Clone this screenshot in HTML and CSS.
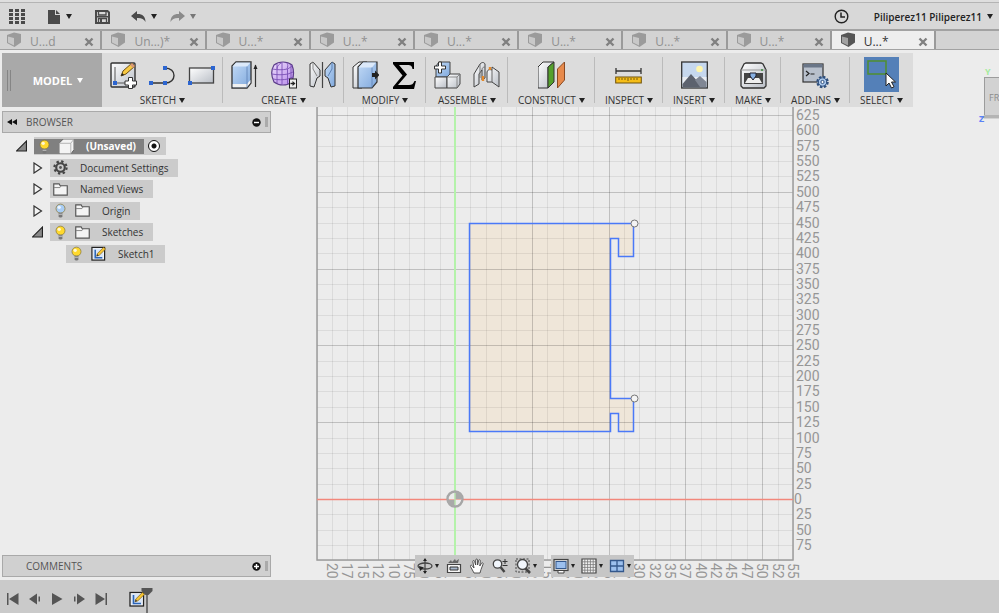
FILE: index.html
```html
<!DOCTYPE html>
<html lang="en">
<head>
    <meta charset="UTF-8">
    <title>Sketch workspace</title>
    <link rel="stylesheet" href="styles.css">
</head>
<body>
    <!-- shared icons -->
    <svg class="defs" width="0" height="0">
        <linearGradient id="blue" x1="0" y1="0" x2="1" y2="1"><stop offset="0" stop-color="#c3dbf7"/><stop offset="1" stop-color="#7fa8dc"/></linearGradient>
        <linearGradient id="silver" x1="0" y1="0" x2="1" y2="1"><stop offset="0" stop-color="#ffffff"/><stop offset="1" stop-color="#b9bec6"/></linearGradient>
        <linearGradient id="purple" x1="0" y1="0" x2="1" y2="1"><stop offset="0" stop-color="#ecdcfd"/><stop offset="1" stop-color="#b78ae8"/></linearGradient>
        <symbol id="tab-cube" viewBox="0 0 16 16">
            <path d="M1 3l7-2.500 7 1.500v8.500L8.500 15 1 11z" fill="currentColor"/>
            <path d="M2 4.500l6 1.500v7.500l-6-3z" fill="#fff" fill-opacity=".45"/>
        </symbol>
        <symbol id="close" viewBox="0 0 10 10">
            <path d="M1.500 1.500l7 7M8.500 1.500l-7 7" stroke="currentColor" stroke-width="2.400"/>
        </symbol>
        <symbol id="bulb" viewBox="0 0 14 16">
            <circle cx="7" cy="6" r="4.800" fill="currentColor" stroke="#8a7a3a" stroke-width=".8"/>
            <circle cx="5.600" cy="4.600" r="1.800" fill="#fff" fill-opacity=".8"/>
            <path d="M5 10.500h4v3.500l-1 1.500H6L5 14z" fill="#777"/>
            <path d="M5 12h4" stroke="#ddd" stroke-width=".8"/>
        </symbol>
        <symbol id="folder" viewBox="0 0 14 14">
            <path d="M.7 3.500V1.700h5l1 1.800h6.600v8.800H.7z" fill="#f4f4f4" stroke="#555" stroke-width="1.100"/>
            <path d="M1 5.200h5.500l1-1.500" fill="none" stroke="#777" stroke-width=".8"/>
        </symbol>
        <symbol id="sketch" viewBox="0 0 16 16">
            <rect x="1" y="1.500" width="13.500" height="13.500" fill="#fff" stroke="#222" stroke-width="1.300"/>
            <rect x="2.200" y="2.700" width="11" height="11" fill="#d9e6f7"/>
            <path d="M4.500 4v8.500H12" fill="none" stroke="#2c65b8" stroke-width="1.600"/>
            <path d="M6 10.800l.9-2.900L13.500 1.300l2 2-6.600 6.500z" fill="#f7c632" stroke="#7a5a14" stroke-width=".7"/>
            <path d="M6 10.800l.7-2.200 1.500 1.500z" fill="#333"/>
        </symbol>
    </svg>

    <header class="topbar">
        <button class="icon-btn" aria-label="Data panel">
            <svg width="16" height="15" viewBox="0 0 16 15" fill="#4a4a4a"><path d="M0 0h4v3H0zM6 0h4v3H6zM12 0h4v3h-4zM0 4h4v3H0zM6 4h4v3H6zM12 4h4v3h-4zM0 8h4v3H0zM6 8h4v3H6zM12 8h4v3h-4zM0 12h4v3H0zM6 12h4v3H6zM12 12h4v3h-4z"/></svg>
        </button>
        <button class="icon-btn" aria-label="File">
            <svg width="13" height="14" viewBox="0 0 13 14" fill="#4a4a4a"><path d="M0 0h7v5h5v9H0z"/><path d="M8 0l4 4H8z"/></svg>
            <span class="caret"></span>
        </button>
        <button class="icon-btn" aria-label="Save">
            <svg width="15" height="14" viewBox="0 0 15 14"><path d="M1 1h11.500L14 2.500V13H1z" fill="none" stroke="#4a4a4a" stroke-width="2"/><path d="M3.500 1h7.500v4H3.500zM3.500 8.500h8V13h-8z" fill="none" stroke="#4a4a4a" stroke-width="1.300"/><path d="M2 6h11v1.500H2zM5 9h2v4H5z" fill="#4a4a4a"/></svg>
        </button>
        <div class="history">
            <button class="icon-btn" aria-label="Undo">
                <svg width="15" height="12" viewBox="0 0 15 12"><path d="M6 0v3c5-.3 8.500 2 8.500 8-1.500-3-4-4.200-8.500-4v3L0 5z" fill="#4a4a4a"/></svg>
                <span class="caret"></span>
            </button>
            <button class="icon-btn faded" aria-label="Redo">
                <svg width="15" height="12" viewBox="0 0 15 12"><path d="M9 0v3C4 2.700.5 5 .5 11 2 8 4.500 6.800 9 7v3l6-5z" fill="#8a8a8a"/></svg>
                <span class="caret"></span>
            </button>
        </div>
        <div class="account">
            <button class="icon-btn" aria-label="Job status">
                <svg width="15" height="15" viewBox="0 0 15 15"><circle cx="7.500" cy="7.500" r="6.300" fill="none" stroke="#222" stroke-width="1.400"/><path d="M7 3.500V8h4" fill="none" stroke="#222" stroke-width="1.500"/></svg>
            </button>
            <button class="user">Piliperez11 Piliperez11 <span class="caret"></span></button>
        </div>
    </header>

    <nav class="tabs">
        <div class="tab"><svg class="tab-icon"><use href="#tab-cube"/></svg><span>U...d</span><button aria-label="Close"><svg><use href="#close"/></svg></button></div>
        <div class="tab"><svg class="tab-icon"><use href="#tab-cube"/></svg><span>Un...)*</span><button aria-label="Close"><svg><use href="#close"/></svg></button></div>
        <div class="tab"><svg class="tab-icon"><use href="#tab-cube"/></svg><span>U...*</span><button aria-label="Close"><svg><use href="#close"/></svg></button></div>
        <div class="tab"><svg class="tab-icon"><use href="#tab-cube"/></svg><span>U...*</span><button aria-label="Close"><svg><use href="#close"/></svg></button></div>
        <div class="tab"><svg class="tab-icon"><use href="#tab-cube"/></svg><span>U...*</span><button aria-label="Close"><svg><use href="#close"/></svg></button></div>
        <div class="tab"><svg class="tab-icon"><use href="#tab-cube"/></svg><span>U...*</span><button aria-label="Close"><svg><use href="#close"/></svg></button></div>
        <div class="tab"><svg class="tab-icon"><use href="#tab-cube"/></svg><span>U...*</span><button aria-label="Close"><svg><use href="#close"/></svg></button></div>
        <div class="tab"><svg class="tab-icon"><use href="#tab-cube"/></svg><span>U...*</span><button aria-label="Close"><svg><use href="#close"/></svg></button></div>
        <div class="tab active"><svg class="tab-icon"><use href="#tab-cube"/></svg><span>U...*</span><button aria-label="Close"><svg><use href="#close"/></svg></button></div>
    </nav>

    <main class="viewport">
        <svg class="canvas">
            <g transform="translate(455 449)">
                <path class="profile" d="M14.500-275.500h164v33h-15v-18h-8v160h23v33h-15v-18h-8v18h-141z"/>
                <g id="grid"></g>
                <line class="axis-y" x1="0" y1="-396" x2="0" y2="61"/>
                <line class="axis-x" x1="-138" y1="0.500" x2="338" y2="0.500"/>
                <path class="outline" d="M14.500-275.500h164v33h-15v-18h-8v160h23v33h-15v-18h-8v18h-141z"/>
                <circle class="point" cx="179.500" cy="-275.500" r="3.500"/>
                <circle class="point" cx="179.500" cy="-100.500" r="3.500"/>
                <circle cx="0" cy="0" r="7.500" fill="#ececec" stroke="#a6a6a6" stroke-width="2.400"/>
                <path d="M0 0V-8A8 8 0 0 1 8 0zM0 0V8A8 8 0 0 1-8 0z" fill="#a9a9a9"/>
                <path d="M-6 .5H6" stroke="#e8b0a8"/>
                <path d="M0-6V6" stroke="#b4e0aa" stroke-width="1.500"/>
            </g>
        </svg>

        <div class="toolbar">
            <button class="workspace"><span class="grip"></span>MODEL <span class="caret"></span></button>

            <div class="group">
                <div class="icons">
                    <button aria-label="Create sketch"><svg viewBox="0 0 27 28"><rect x="1" y="2" width="24" height="24" rx="1" fill="url(#silver)" stroke="#333" stroke-width="1.400"/><path d="M5 6v16h12" fill="none" stroke="#555"/><path d="M3 20h4v4H3z" fill="#2c65d0"/><path d="M11 15l2-5 9-8 3 3-9 8z" fill="#f7c943" stroke="#6b4d12"/><path d="M22 2l3 3-2 2-3-3z" fill="#d79a7a"/><path d="M11 15l1.200-3 2 2z" fill="#222"/><path d="M18.500 16.500h4v3.500h4v4h-4v3.500h-4V24h-3.500v-4h3.500z" fill="#fff" stroke="#333"/></svg></button>
                    <button aria-label="Line"><svg viewBox="0 0 27 28"><path d="M2 22h14c12 0 12-15 0-15" fill="none" stroke="#333" stroke-width="1.400"/><path d="M0 20h4v4H0zM14 20h4v4h-4zM14 5h4v4h-4z" fill="#2c65d0"/></svg></button>
                    <button aria-label="Rectangle"><svg viewBox="0 0 27 28"><rect x="1.500" y="7" width="24" height="15" fill="url(#silver)" stroke="#444" stroke-width="1.300"/><path d="M0 20h4v4H0zM23 5h4v4h-4z" fill="#2c65d0"/></svg></button>
                </div>
                <button class="label">SKETCH <span class="caret"></span></button>
            </div>

            <div class="group">
                <div class="icons">
                    <button aria-label="Extrude"><svg viewBox="0 0 27 28"><path d="M1 5l4-4h15v21l-4 5H1z" fill="url(#blue)" stroke="#333" stroke-width="1.300"/><path d="M1.700 23H16l3.400-4v3l-3.600 4.300H1.700z" fill="#f1f1f1"/><path d="M1.500 5.500H16L19.500 1.500H5z" fill="#dce9f9"/><path d="M16 5.500v21" fill="none" stroke="#5d82b5" stroke-width=".8"/><path d="M24.500 26V4" stroke="#333" stroke-width="1.200"/><path d="M22.500 8l2-4.500 2 4.500z" fill="#222"/></svg></button>
                    <button aria-label="Create form"><svg viewBox="0 0 27 28"><path d="M4 4c5-4 13-4 18 0 2 5 2 11 0 17-5 4-13 4-18 0C1 15 1 9 4 4z" fill="url(#purple)" stroke="#5c3d8a" stroke-width="1.200"/><path d="M2.500 8c5 1 10 1 15 0l5-3M2 13c5 1 11 1 16 0l5-2M3 18c5 1 10 1 15 0l5-2M7 3v19M12 1.500v22M17.500 8v15M7 8c0-3 2-5 5-6.500M17 8c1-3 1-4 0-6M21 4v17" fill="none" stroke="#7a50b5" stroke-width=".9"/><rect x="19.500" y="18" width="7" height="9" fill="#eee" stroke="#222"/><path d="M20.500 22.500h3" stroke="#222" stroke-width="1.400"/><path d="M22.500 20l3 2.500-3 2.500z" fill="#222"/></svg></button>
                    <button aria-label="Mirror"><svg viewBox="0 0 27 28"><path d="M1 3l3-2 7 8v6l-3 2-3 9-4-1z" fill="url(#silver)" stroke="#333"/><path d="M4 1v7l4 7" stroke="#888" fill="none"/><path d="M26 3l-3-2-7 8v6l3 2 3 9 4-1z" fill="url(#blue)" stroke="#333"/><path d="M23 1v7l-4 7" stroke="#5d82b5" fill="none"/><path d="M13.500 1v26" stroke="#444" stroke-width="1.200"/></svg></button>
                </div>
                <button class="label">CREATE <span class="caret"></span></button>
            </div>

            <div class="group">
                <div class="icons">
                    <button aria-label="Press pull"><svg viewBox="0 0 27 28"><path d="M1 6l6-5h8l-5 5v21H1z" fill="url(#silver)" stroke="#333"/><path d="M6 6l5-5h14v20l-5 6H6z" fill="url(#blue)" stroke="#333" stroke-width="1.200"/><path d="M6.500 6.500H20l4-5H11z" fill="#dce9f9"/><path d="M20 6.500v20" fill="none" stroke="#5d82b5" stroke-width=".8"/><path d="M20 12h3V9.500l4.500 4.500-4.500 4.500V16h-3z" fill="#222"/></svg></button>
                    <button aria-label="Parameters"><svg viewBox="0 0 27 28"><path d="M2 1h21v7h-1.500c-.5-3-1.500-4-5-4H8l8 9.500L7 24h11c3 0 4-1 5.500-4H25l-2 8H2v-2l9.500-11.500L2 3z" fill="#000"/></svg></button>
                </div>
                <button class="label">MODIFY <span class="caret"></span></button>
            </div>

            <div class="group">
                <div class="icons">
                    <button aria-label="New component"><svg viewBox="0 0 27 28"><path d="M2 5l3-4h11v12l-3 3H2z" fill="url(#blue)" stroke="#444"/><path d="M1 16h12v11H1z" fill="url(#silver)" stroke="#444"/><path d="M13 16l3-3h10v10l-3 4H13z" fill="url(#silver)" stroke="#444"/><path d="M13 16h10l3-3M23 16v11" fill="none" stroke="#777" stroke-width=".8"/><path d="M4.500 1h3v4h4v3h-4v4h-3V8h-4V5h4z" fill="#fff" stroke="#333"/></svg></button>
                    <button aria-label="Joint"><svg viewBox="0 0 27 28"><path d="M1 26V13l6-10c2-2 4-2 5 0v14l-3 2V9L6 13v10z" fill="url(#silver)" stroke="#444"/><path d="M7 3v14M9 9c0-2 1-3 3-3" fill="none" stroke="#777"/><path d="M14 21V12c0-3 2-4 5-3V6l7 5v15l-7-5z" fill="url(#silver)" stroke="#444"/><path d="M19 9v12" fill="none" stroke="#666"/><path d="M10 20v-5M17 9V6" stroke="#e58a2c" stroke-width="2.400"/></svg></button>
                </div>
                <button class="label">ASSEMBLE <span class="caret"></span></button>
            </div>

            <div class="group wide">
                <div class="icons">
                    <button aria-label="Offset plane"><svg viewBox="0 0 27 28"><path d="M0 6l5-5h11l-6 5v21H0z" fill="url(#silver)" stroke="#333"/><path d="M10 6l6-5v20l-6 6z" fill="#54a02c" stroke="#333"/><path d="M19.500 8l7-7v18l-7 8z" fill="#e78a4c" stroke="#8a4a22"/></svg></button>
                </div>
                <button class="label">CONSTRUCT <span class="caret"></span></button>
            </div>

            <div class="group wide">
                <div class="icons">
                    <button aria-label="Measure"><svg viewBox="0 0 27 28"><path d="M1 10h25M1 7v6M26 7v6" stroke="#333" stroke-width="1.300"/><rect x=".7" y="16" width="25.600" height="6" fill="#f5bd18" stroke="#6e520a"/><path d="M4 17v2M7 17v2M10 17v2M13 17v3M16 17v2M19 17v2M22 17v2" stroke="#6e520a" stroke-width=".9"/></svg></button>
                </div>
                <button class="label">INSPECT <span class="caret"></span></button>
            </div>

            <div class="group wide">
                <div class="icons">
                    <button aria-label="Insert image"><svg viewBox="0 0 27 28"><rect x=".7" y="1" width="25.600" height="26" fill="#c6d8ee" stroke="#333" stroke-width="1.300"/><path d="M1.500 16h24v10h-24z" fill="#e9edf2"/><circle cx="18.500" cy="8" r="3.300" fill="#fff6ae"/><path d="M1.500 23L10 13l8 9 3 4H1.500z" fill="#5c626e"/><path d="M14 19l5-4 6.500 6v5H19z" fill="#808794"/></svg></button>
                </div>
                <button class="label">INSERT <span class="caret"></span></button>
            </div>

            <div class="group wide">
                <div class="icons">
                    <button aria-label="3D print"><svg viewBox="0 0 27 28"><path d="M1 9l3-6 2-1h15l2 1 3 6v16l-2 2H3l-2-2z" fill="url(#silver)" stroke="#333" stroke-width="1.300"/><path d="M1 9h25" stroke="#999"/><rect x="4" y="12" width="19" height="11" fill="#444"/><path d="M5 22l3-5h11l3 5z" fill="#eee"/><path d="M10 12h6v3l-3 4-3-4z" fill="#86afe2" stroke="#223"/><circle cx="22" cy="9" r="1" fill="#3a8c3a"/></svg></button>
                </div>
                <button class="label">MAKE <span class="caret"></span></button>
            </div>

            <div class="group wide">
                <div class="icons">
                    <button aria-label="Scripts and add-ins"><svg viewBox="0 0 27 28"><rect x="1" y="3" width="20" height="18" fill="#b8c0cc" stroke="#333" stroke-width="1.200"/><path d="M1.500 3h19v3.500h-19z" fill="#6a7688"/><path d="M4 10l3 2.500-3 2.500M8.500 13h4" fill="none" stroke="#222" stroke-width="1.200"/><circle cx="20.500" cy="21" r="5" fill="#b9d2f0" stroke="#2f4f7c" stroke-width="2.500" stroke-dasharray="2.400 1.500"/><circle cx="20.500" cy="21" r="4.200" fill="#a9c7ec" stroke="#2f4f7c"/><circle cx="20.500" cy="21" r="1.600" fill="#fff" stroke="#2f4f7c"/></svg></button>
                </div>
                <button class="label">ADD-INS <span class="caret"></span></button>
            </div>

            <div class="group wide">
                <div class="icons">
                    <button class="selected" aria-label="Select"><svg viewBox="0 0 35 35"><rect x="4" y="4" width="18" height="13" fill="none" stroke="#4f8f2e" stroke-width="1.500"/><path d="M22 16v13l3-3 2.500 5 2.500-1.200-2.500-4.800h4z" fill="#fff" stroke="#222"/></svg></button>
                </div>
                <button class="label">SELECT <span class="caret"></span></button>
            </div>
        </div>

        <aside class="side">
            <section>
                <div class="panel-head">
                    <svg width="10" height="8" viewBox="0 0 10 8"><path d="M5 1v6L0 4zM10 1v6L5 4z" fill="#111"/></svg>
                    <h2>BROWSER</h2>
                    <button class="round" aria-label="Collapse"><svg viewBox="0 0 9 9"><circle cx="4.500" cy="4.500" r="4.200" fill="#111"/><path d="M2 4.500h5" stroke="#fff" stroke-width="1.400"/></svg></button>
                    <span class="handle"></span>
                </div>
                <ul class="tree">
                    <li>
                        <svg class="twisty" viewBox="0 0 10 10"><path d="M9.500.5v9H.5z" fill="#888" stroke="#222"/></svg>
                        <div class="node root">
                            <span class="name"><svg class="ico on"><use href="#bulb"/></svg><svg class="ico" viewBox="0 0 14 14"><path d="M0 4l4-4h10v10l-3 4H0z" fill="#f4f4f4" stroke="#555" stroke-width=".8"/><path d="M0 4h11l3-4M11 4v10" fill="none" stroke="#aaa" stroke-width=".8"/></svg><b class="text">(Unsaved)</b></span>
                            <input type="radio" name="active" aria-label="Activate component" checked>
                        </div>
                    </li>
                    <li class="level-1">
                        <svg class="twisty" viewBox="0 0 10 12"><path d="M1.500 1v10L9 6z" fill="#f4f4f4" stroke="#333" stroke-width="1.200"/></svg>
                        <div class="node"><svg class="ico" viewBox="0 0 14 14"><circle cx="7" cy="7" r="5.700" fill="none" stroke="#444" stroke-width="2" stroke-dasharray="2.200 2.270"/><circle cx="7" cy="7" r="4" fill="none" stroke="#444" stroke-width="2"/><circle cx="7" cy="7" r="1.300" fill="#555"/></svg><span class="text">Document Settings</span></div>
                    </li>
                    <li class="level-1">
                        <svg class="twisty" viewBox="0 0 10 12"><path d="M1.500 1v10L9 6z" fill="#f4f4f4" stroke="#333" stroke-width="1.200"/></svg>
                        <div class="node"><svg class="ico"><use href="#folder"/></svg><span class="text">Named Views</span></div>
                    </li>
                    <li class="level-1">
                        <svg class="twisty" viewBox="0 0 10 12"><path d="M1.500 1v10L9 6z" fill="#f4f4f4" stroke="#333" stroke-width="1.200"/></svg>
                        <div class="node"><svg class="ico off"><use href="#bulb"/></svg><svg class="ico"><use href="#folder"/></svg><span class="text">Origin</span></div>
                    </li>
                    <li class="level-1">
                        <svg class="twisty" viewBox="0 0 10 10"><path d="M9.500.5v9H.5z" fill="#888" stroke="#222"/></svg>
                        <div class="node"><svg class="ico on"><use href="#bulb"/></svg><svg class="ico"><use href="#folder"/></svg><span class="text">Sketches</span></div>
                    </li>
                    <li class="level-2">
                        <div class="node"><svg class="ico on"><use href="#bulb"/></svg><svg class="ico"><use href="#sketch"/></svg><span class="text">Sketch1</span></div>
                    </li>
                </ul>
            </section>
            <div class="panel-head comments">
                <h2>COMMENTS</h2>
                <button class="round" aria-label="Expand"><svg viewBox="0 0 9 9"><circle cx="4.500" cy="4.500" r="4.200" fill="#111"/><path d="M2 4.500h5M4.500 2v5" stroke="#fff" stroke-width="1.400"/></svg></button>
                <span class="handle"></span>
            </div>
        </aside>

        <svg class="viewcube" width="22" height="60" viewBox="0 0 22 60">
            <path d="M8 13h14v42H7z" fill="#d2d2d2"/>
            <path d="M7.500 13.500H22M7.500 13v38" stroke="#9c9c9c" fill="none"/>
            <path d="M3 54l5-3h14v3z" fill="#b4b4b4"/>
            <text x="12" y="37" class="face">FR</text>
            <text x="8" y="11" class="y-letter">Y</text>
            <text x="2" y="58" class="z-letter">Z</text>
        </svg>

        <div class="navbar">
            <div class="nav-group">
                <button aria-label="Orbit"><svg viewBox="0 0 16 16"><ellipse cx="8" cy="8" rx="7" ry="3" fill="none" stroke="#444" stroke-width="1.300"/><path d="M8 1v14" stroke="#444" stroke-width="1.200"/><path d="M6 3l2-3 2 3zM6 13l2 3 2-3zM2 8l5 1.500L3 13z" fill="#222"/></svg><span class="caret"></span></button>
                <button aria-label="Look at"><svg viewBox="0 0 16 16"><path d="M1.500 6.500h13v8h-13z" fill="#f6f6f6" stroke="#444" stroke-width="1.200"/><path d="M4 9h8v3H4z" fill="#a9b8cc" stroke="#333"/><path d="M2 5l3-3 1 2 3-3 1 2 3-2-1 4z" fill="#666"/></svg></button>
                <button aria-label="Pan"><svg viewBox="0 0 16 16"><path d="M5 15L1.500 8.500c-.5-1.500 1-1.800 1.700-.7L5 10 3.800 3.500c0-1.300 1.500-1.300 1.800 0L6.700 7V2c.1-1.300 1.800-1.300 1.900 0v5l1-4.500c.4-1.200 1.900-.9 1.700.4L10.800 8l1.700-2.800c.7-1 2-.3 1.600.8L12 11.500 11 15z" fill="#fff" stroke="#444" stroke-width=".9"/></svg></button>
                <button aria-label="Zoom"><svg viewBox="0 0 16 16"><path d="M8.500 9l4 5" stroke="#444" stroke-width="2.400"/><circle cx="5.500" cy="6" r="4.200" fill="#f1f6fc" stroke="#444" stroke-width="1.300"/><path d="M13 1v5M10.500 3.500h5M10.500 7.500h5" stroke="#333"/></svg></button>
                <button aria-label="Zoom window"><svg viewBox="0 0 16 16"><path d="M1 1h13v13H1z" fill="none" stroke="#444" stroke-dasharray="2 1.500"/><path d="M10 10l5 5" stroke="#444" stroke-width="2.600"/><circle cx="7.500" cy="6.500" r="5" fill="#f1f6fc" stroke="#444" stroke-width="1.300"/></svg><span class="caret"></span></button>
            </div>
            <div class="nav-group display">
                <button aria-label="Display settings"><svg viewBox="0 0 16 16"><rect x="1" y="1.500" width="14" height="11" fill="#ddd" stroke="#444" stroke-width="1.200"/><rect x="3" y="3.500" width="10" height="7" fill="#9cc0ee" stroke="#34588c"/><path d="M5 12.500v2.500h6v-2.500z" fill="#fff" stroke="#444"/></svg><span class="caret"></span></button>
                <button aria-label="Grid and snaps"><svg viewBox="0 0 16 16"><path d="M1 1h14v14H1z" fill="#f2f2f2" stroke="#444" stroke-width="1.200"/><path d="M3.800 1v14M6.600 1v14M9.400 1v14M12.200 1v14M1 3.800h14M1 6.600h14M1 9.400h14M1 12.200h14" stroke="#777" stroke-width=".8"/></svg><span class="caret"></span></button>
                <button aria-label="Viewports"><svg viewBox="0 0 16 16"><path d="M1.500 2.500h13v11h-13zM8 2.500v11M1.500 8h13" fill="#9cc0ee" stroke="#34588c" stroke-width="1.300"/></svg><span class="caret"></span></button>
            </div>
        </div>
    </main>

    <footer class="timeline">
        <button aria-label="Go to start"><svg viewBox="0 0 12 12"><path d="M0 0h1.500v12H0zM11.500 0v12L2 6z"/></svg></button>
        <button aria-label="Step back"><svg viewBox="0 0 12 12"><path d="M8 .5v11L0 6zM9.500 3.500H11v5H9.500z"/></svg></button>
        <button aria-label="Play"><svg viewBox="0 0 12 12"><path d="M1 0v12l10.500-6z"/></svg></button>
        <button aria-label="Step forward"><svg viewBox="0 0 12 12"><path d="M4 .5v11L12 6zM1 3.500h1.500v5H1z"/></svg></button>
        <button aria-label="Go to end"><svg viewBox="0 0 12 12"><path d="M10.500 0H12v12h-1.500zM.5 0v12L10 6z"/></svg></button>
        <button class="feature" aria-label="Sketch1">
            <svg class="feature-icon"><use href="#sketch"/></svg>
            <svg class="marker" width="12" height="26" viewBox="0 0 12 26"><path d="M.5 1h11v3L7.500 8h-3L.5 4z" fill="#555"/><path d="M6 7v19" stroke="#555" stroke-width="1.500"/></svg>
        </button>
    </footer>

    <script src="grid.js"></script>
</body>
</html>
```

FILE: styles.css
```css
* {
    box-sizing: border-box;
}

body {
    margin: 0;
    height: 100vh;
    display: flex;
    flex-direction: column;
    overflow: hidden;
    background: #ececec;
    color: #333;
    font-family: "Open Sans", "Noto Sans", sans-serif;
    font-size: 10px;
}

button {
    margin: 0;
    padding: 0;
    border: none;
    background: none;
    color: inherit;
    font: inherit;
    cursor: pointer;
}

svg {
    display: block;
    flex: none;
}

.defs {
    position: absolute;
}

.caret {
    display: inline-block;
    border: 3px solid transparent;
    border-top: 5px solid #222;
    border-bottom: none;
}

/* top bar */
.topbar {
    display: flex;
    align-items: center;
    gap: 23px;
    height: 29px;
    padding: 4px 6px 0 9px;
    background: #d8d8d8;
    box-shadow: inset 0 2px #dedede, inset 0 3px #b4b4b4;
}

.icon-btn {
    display: flex;
    align-items: center;
    gap: 5px;
}

.history {
    display: flex;
    gap: 13px;
    margin-left: -2px;
}

.faded .caret {
    border-top-color: #777;
}

.account {
    display: flex;
    align-items: center;
    gap: 25px;
    margin-left: auto;
}

.user {
    display: flex;
    align-items: center;
    gap: 5px;
    color: #222;
    font-weight: 600;
}

/* document tabs */
.tabs {
    display: flex;
    height: 21px;
    background: #d3d3d3;
    border-top: 2px solid #a2a2a2;
    border-bottom: 1px solid #a2a2a2;
}

.tab {
    display: flex;
    align-items: center;
    width: 10.43%;
    padding: 3px 6px 0 8px;
    border-right: 2px solid #9a9a9a;
    color: #909090;
}

.tab:first-child {
    width: 10.25%;
    padding-left: 6px;
}

.tab-icon {
    width: 16px;
    height: 16px;
    margin-bottom: 3px;
    color: #9b9b9b;
}

.tab span {
    margin-left: 8px;
    font-size: 12px;
}

.tab button {
    margin-left: auto;
}

.tab button svg {
    width: 10px;
    height: 10px;
    color: #808080;
}

.tab.active {
    background: #eee;
    color: #333;
}

.tab.active .tab-icon {
    color: #555;
}

/* modelling area */
.viewport {
    position: relative;
    display: flex;
    flex: 1;
    flex-direction: column;
    align-items: flex-start;
    min-height: 0;
    padding: 3px 2px;
    overflow: hidden;
}

.canvas {
    position: absolute;
    top: 0;
    left: 0;
    width: 100%;
    height: 100%;
}

.profile {
    fill: #efe6d9;
}

.outline {
    fill: none;
    stroke: #4a79f8;
    stroke-width: 1.5;
}

.minor {
    stroke: #000;
    stroke-opacity: .07;
}

.major {
    stroke: #000;
    stroke-opacity: .19;
}

.border {
    fill: none;
    stroke: #9c9c9c;
    stroke-width: 1.5;
}

.axis-x {
    stroke: #f2877b;
    stroke-width: 1.5;
}

.axis-y {
    stroke: #b4f2aa;
    stroke-width: 2;
}

.point {
    fill: #f4f4f4;
    stroke: #777;
}

.tick {
    fill: #969696;
    font-family: Roboto, sans-serif;
    font-size: 14px;
}

/* ribbon */
.toolbar {
    position: relative;
    display: flex;
    height: 54px;
    background: #dcdcdc;
}

.workspace {
    position: relative;
    display: flex;
    align-items: center;
    justify-content: center;
    gap: 5px;
    width: 100px;
    padding-left: 12px;
    background: #a9a9a9;
    color: #fff;
    font-size: 11px;
    font-weight: 700;
}

.workspace .caret {
    border-top-color: #fff;
}

.grip {
    position: absolute;
    left: 5px;
    width: 4px;
    height: 21px;
    border: solid #858585;
    border-width: 0 1px;
}

.group {
    display: flex;
    flex-direction: column;
    align-items: center;
    padding: 4px 8px 0;
    background: linear-gradient(#bbb, #bbb) right 4px / 1px 46px no-repeat;
}

.group.wide {
    padding: 4px 10px 0;
}

.group:last-child {
    background: none;
}

.icons {
    display: flex;
    flex: none;
    align-items: center;
    gap: 12px;
    height: 35px;
}

.icons svg {
    width: 27px;
    height: 28px;
}

.icons .selected {
    background: #5480b8;
}

.icons .selected svg {
    width: 35px;
    height: 35px;
}

.label {
    display: flex;
    align-items: center;
    gap: 3px;
    line-height: 17px;
}

/* browser and comments panels */
.side {
    position: relative;
    display: flex;
    flex: 1;
    flex-direction: column;
    justify-content: space-between;
    width: 269px;
    padding-top: 4px;
}

.panel-head {
    display: flex;
    align-items: center;
    height: 22px;
    padding: 0 2px 0 4px;
    background: #d0d0d0;
    border: 1px solid #a9a9a9;
}

.panel-head h2 {
    margin: 0 0 0 9px;
    color: #555;
    font-size: 10px;
    font-weight: 400;
}

.comments h2 {
    margin-left: 19px;
}

.round {
    margin-left: auto;
}

.round svg {
    width: 9px;
    height: 9px;
}

.handle {
    width: 3px;
    height: 10px;
    margin-left: 4px;
    background: #aaa;
}

.tree {
    display: flex;
    flex-direction: column;
    justify-content: space-between;
    height: 126px;
    margin: 4px 0 0 14px;
    padding: 0;
    list-style: none;
}

.tree li {
    display: flex;
    align-items: center;
}

.level-1 {
    padding-left: 16px;
}

.level-2 {
    padding-left: 50px;
}

.twisty {
    width: 11px;
    height: 12px;
    margin-right: 7px;
}

.node {
    display: flex;
    align-items: center;
    gap: 7px;
    height: 18px;
    padding: 0 10px 0 3px;
    background: #cbcbcb;
}

.ico {
    width: 15px;
    height: 15px;
}

.ico.on {
    color: #ffd92e;
}

.ico.off {
    color: #a9cdf5;
}

.text {
    margin-left: 5px;
}

.root {
    gap: 4px;
    padding: 0 6px 0 0;
}

.name {
    display: flex;
    align-items: center;
    gap: 7px;
    height: 15px;
    padding: 0 8px 0 3px;
    background: #808080;
    color: #fff;
}

.root input {
    appearance: none;
    width: 12px;
    height: 12px;
    margin: 0;
    border: 1px solid #111;
    border-radius: 50%;
    background: radial-gradient(#111 2px, #fff 3px);
}

/* view cube in the corner */
.viewcube {
    position: absolute;
    top: 14px;
    right: 0;
}

.face {
    fill: #8c8c8c;
    font-size: 9px;
}

.y-letter {
    fill: #a4eb9c;
    font-size: 9px;
    font-weight: 700;
}

.z-letter {
    fill: #5b82f7;
    font-size: 9px;
    font-weight: 700;
}

/* navigation bar */
.navbar {
    position: absolute;
    bottom: 3px;
    left: 415px;
    display: flex;
    gap: 7px;
}

.nav-group {
    display: flex;
    align-items: center;
    gap: 7px;
    height: 22px;
    padding: 0 7px 0 2px;
    background: #c6c6c6;
}

.nav-group.display {
    gap: 6px;
    padding: 0 3px 0 2px;
}

.nav-group button {
    display: flex;
    align-items: center;
    gap: 2px;
}

.nav-group svg {
    width: 16px;
    height: 16px;
}

.nav-group .caret {
    border-width: 4px 2px 0;
}

/* timeline */
.timeline {
    display: flex;
    align-items: center;
    gap: 10px;
    height: 33px;
    padding: 4px 7px 0;
    background: #cacaca;
    fill: #555;
}

.timeline svg {
    width: 12px;
    height: 12px;
}

.timeline .feature {
    position: relative;
    margin-left: 12px;
}

.timeline .feature-icon {
    width: 16px;
    height: 16px;
}

.timeline .marker {
    position: absolute;
    top: -4px;
    left: 12px;
    width: 12px;
    height: 26px;
}
```

FILE: grid.js
```javascript
const NS = 'http://www.w3.org/2000/svg';
const grid = document.getElementById('grid');

// one grid cell is 25 mm, the origin is at 0,0
const CELL = 15.36;
const LEFT = -9, RIGHT = 22, TOP = -26, BOTTOM = 4;

function px(n) {
    return Math.round(n * CELL);
}

function add(tag, attrs, text) {
    const el = document.createElementNS(NS, tag);
    for (const key in attrs) {
        el.setAttribute(key, attrs[key]);
    }
    if (text !== undefined) {
        el.textContent = text;
    }
    grid.appendChild(el);
}

for (let i = LEFT; i <= RIGHT; i++) {
    const x = px(i) + 0.5;
    if (i !== 0) {
        add('path', { class: i % 5 ? 'minor' : 'major', d: `M${x} ${px(TOP)}V${px(BOTTOM)}` });
    }
    if (i > LEFT) {
        const label = String(Math.abs(i * 25)).slice(0, 2);
        add('text', { class: 'tick', transform: `translate(${px(i) - 5} 64) rotate(90)` }, label);
    }
}

for (let i = TOP; i <= BOTTOM; i++) {
    const y = px(i) + 0.5;
    if (i !== 0) {
        add('path', { class: i % 5 ? 'minor' : 'major', d: `M${px(LEFT)} ${y}H${px(RIGHT)}` });
    }
    if (i > TOP && i < BOTTOM) {
        add('text', { class: 'tick', x: px(RIGHT) + (i ? 3 : 1), y: px(i) + 5 }, Math.abs(i * 25));
    }
}

add('path', { class: 'border', d: `M${px(LEFT)} ${px(TOP)}V${px(BOTTOM)}H${px(RIGHT)}V${px(TOP)}` });
```
